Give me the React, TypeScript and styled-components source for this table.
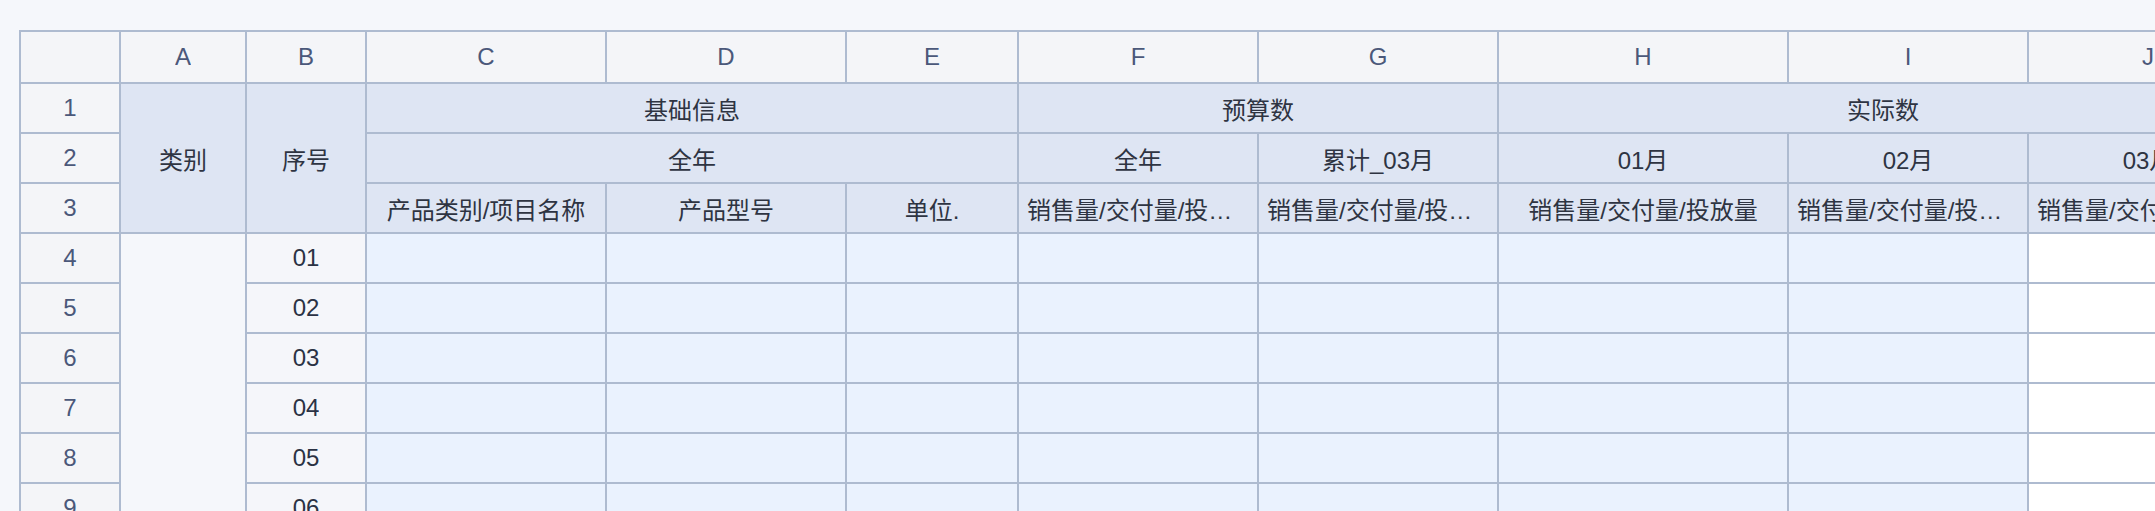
import styled, { createGlobalStyle } from 'styled-components';

const GlobalStyle = createGlobalStyle`
  html, body {
    margin: 0;
    padding: 0;
    background: #f5f7fb;
    overflow: hidden;
  }
  body {
    font-family: 'Liberation Sans', 'Noto Sans CJK SC', sans-serif;
  }
`;

const Page = styled.div`
  padding: 30px 0 0 19px;
  width: max-content;
`;

const Sheet = styled.div`
  display: grid;
  grid-template-columns: 98px 124px 118px 238px 238px 170px 238px 238px 288px 238px 238px;
  grid-template-rows: 50px repeat(10, 48px);
  gap: 2px;
  padding: 2px;
  background: #aebbd0;
`;

type Tone = 'head' | 'band' | 'data' | 'blank' | 'serial' | 'white';

const bg: Record<Tone, string> = {
  head: '#f4f5f8',
  band: '#dee5f3',
  data: '#eaf2fe',
  blank: '#f5f7fb',
  serial: '#f5f6fa',
  white: '#ffffff',
};

const ink: Record<Tone, string> = {
  head: '#4b587a',
  band: '#2e3442',
  data: '#2e3442',
  blank: '#2e3442',
  serial: '#2b3244',
  white: '#2e3442',
};

const Cell = styled.div<{ $tone: Tone; $col?: number; $row?: number; $span?: number; $rows?: number }>`
  display: grid;
  place-items: center;
  min-width: 0;
  padding: 0 8px;
  background: ${(p) => bg[p.$tone]};
  color: ${(p) => ink[p.$tone]};
  font-size: 24px;
  ${(p) => (p.$col ? `grid-column: ${p.$col} / span ${p.$span || 1};` : '')}
  ${(p) => (p.$row ? `grid-row: ${p.$row} / span ${p.$rows || 1};` : '')}
`;

const Text = styled.span`
  max-width: 100%;
  overflow: hidden;
  white-space: nowrap;
  text-overflow: ellipsis;
`;

const letters = ['A', 'B', 'C', 'D', 'E', 'F', 'G', 'H', 'I', 'J', 'K'];
const qty = '销售量/交付量/投放量';
const dataRows = [4, 5, 6, 7, 8, 9, 10];

const App = () => {
  return (
    <>
      <GlobalStyle />
      <Page>
        <Sheet>
          {/* column letters */}
          <Cell $tone="head" $col={1} $row={1} />
          {letters.map((l, i) => (
            <Cell key={l} $tone="head" $col={i + 2} $row={1}>
              <Text>{l}</Text>
            </Cell>
          ))}

          {/* row numbers */}
          {[1, 2, 3, ...dataRows].map((n) => (
            <Cell key={'r' + n} $tone="head" $col={1} $row={n + 1}>
              <Text>{n}</Text>
            </Cell>
          ))}

          {/* header band */}
          <Cell $tone="band" $col={2} $row={2} $rows={3}>
            <Text>类别</Text>
          </Cell>
          <Cell $tone="band" $col={3} $row={2} $rows={3}>
            <Text>序号</Text>
          </Cell>
          <Cell $tone="band" $col={4} $span={3} $row={2}>
            <Text>基础信息</Text>
          </Cell>
          <Cell $tone="band" $col={7} $span={2} $row={2}>
            <Text>预算数</Text>
          </Cell>
          <Cell $tone="band" $col={9} $span={3} $row={2}>
            <Text>实际数</Text>
          </Cell>
          <Cell $tone="band" $col={12} $row={2} />

          <Cell $tone="band" $col={4} $span={3} $row={3}>
            <Text>全年</Text>
          </Cell>
          <Cell $tone="band" $col={7} $row={3}>
            <Text>全年</Text>
          </Cell>
          <Cell $tone="band" $col={8} $row={3}>
            <Text>累计_03月</Text>
          </Cell>
          <Cell $tone="band" $col={9} $row={3}>
            <Text>01月</Text>
          </Cell>
          <Cell $tone="band" $col={10} $row={3}>
            <Text>02月</Text>
          </Cell>
          <Cell $tone="band" $col={11} $row={3}>
            <Text>03月</Text>
          </Cell>
          <Cell $tone="band" $col={12} $row={3} />

          <Cell $tone="band" $col={4} $row={4}>
            <Text>产品类别/项目名称</Text>
          </Cell>
          <Cell $tone="band" $col={5} $row={4}>
            <Text>产品型号</Text>
          </Cell>
          <Cell $tone="band" $col={6} $row={4}>
            <Text>单位.</Text>
          </Cell>
          {[7, 8, 9, 10, 11, 12].map((c) => (
            <Cell key={'q' + c} $tone="band" $col={c} $row={4}>
              <Text>{qty}</Text>
            </Cell>
          ))}

          {/* body */}
          <Cell $tone="blank" $col={2} $row={5} $rows={dataRows.length} />
          {dataRows.map((n, i) => (
            <Cell key={'s' + n} $tone="serial" $col={3} $row={n + 1}>
              <Text>{String(i + 1).padStart(2, '0')}</Text>
            </Cell>
          ))}
          {dataRows.map((n) =>
            [4, 5, 6, 7, 8, 9, 10, 11, 12].map((c) => (
              <Cell key={n + '-' + c} $tone={c >= 11 ? 'white' : 'data'} $col={c} $row={n + 1} />
            ))
          )}
        </Sheet>
      </Page>
    </>
  );
};

export default App;
